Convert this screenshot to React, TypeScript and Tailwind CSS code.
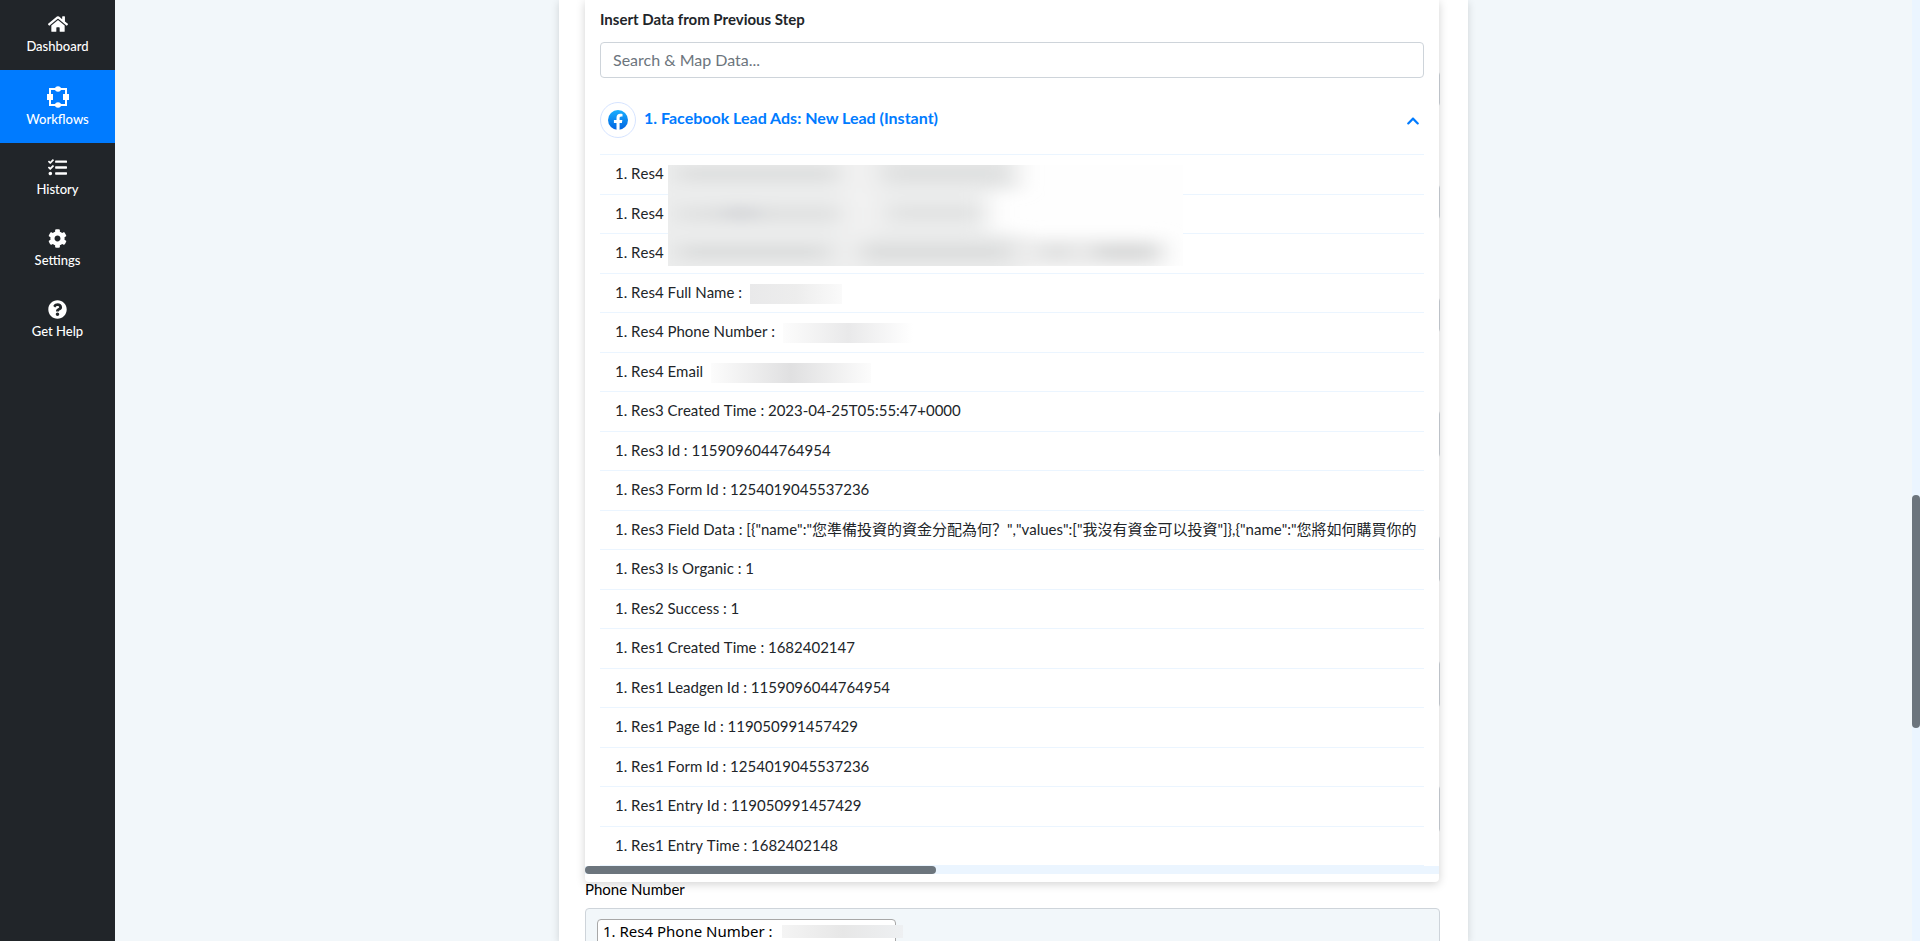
import { FaHome, FaTasks, FaCog, FaQuestionCircle, FaChevronUp } from "react-icons/fa";

const WorkflowIcon = () => (
  <svg viewBox="0 0 22 22" className="h-[22px] w-[22px]" fill="none" aria-hidden="true">
    <rect x="3" y="3" width="16" height="16" stroke="white" strokeWidth="2" />
    <ellipse cx="11" cy="3" rx="3" ry="2.800" fill="white" />
    <ellipse cx="11" cy="19" rx="3" ry="2.800" fill="white" />
    <rect x="0" y="8" width="6" height="6" fill="white" />
    <rect x="16" y="8" width="6" height="6" fill="white" />
  </svg>
);

const FacebookIcon = () => (
  <svg viewBox="0 0 24 24" className="h-5 w-5" aria-hidden="true">
    <defs>
      <linearGradient id="fb" x1="0" y1="0" x2="0" y2="1">
        <stop offset="0" stopColor="#19afff" />
        <stop offset="1" stopColor="#0062e0" />
      </linearGradient>
    </defs>
    <circle cx="12" cy="12" r="12" fill="url(#fb)" />
    <path
      fill="white"
      d="M16.7 15.5l.5-3.5h-3.3V9.7c0-1 .5-1.9 2-1.9h1.5v-3s-1.400-.2-2.700-.2c-2.700 0-4.500 1.700-4.500 4.700V12H7.100v3.500h3.100V24q1.800.2 3.700 0v-8.500z"
    />
  </svg>
);

const nav = [
  { label: "Dashboard", icon: <FaHome size={20} />, style: "h-[70px] pt-[13px]" },
  { label: "Workflows", icon: <WorkflowIcon />, style: "h-[73px] pt-4 bg-[#007bff]" },
  { label: "History", icon: <FaTasks size={19} />, style: "h-[71px] pt-[13px]" },
  { label: "Settings", icon: <FaCog size={19} />, style: "h-[71px] pt-[13px]" },
  { label: "Get Help", icon: <FaQuestionCircle size={19} />, style: "h-[71px] pt-[13px]" },
];

const rows: { text: string; mask?: string }[] = [
  { text: "1. Res4" },
  { text: "1. Res4" },
  { text: "1. Res4" },
  { text: "1. Res4 Full Name :", mask: "w-[92px] from-[#e9e9ea] via-[#ededed] to-[#fafafa]" },
  { text: "1. Res4 Phone Number :", mask: "w-[130px] from-[#fcfcfc] via-[#e9e9ea] to-white" },
  { text: "1. Res4 Email", mask: "w-[160px] from-[#fcfcfc] via-[#e0e0e1] to-[#fcfcfc]" },
  { text: "1. Res3 Created Time : 2023-04-25T05:55:47+0000" },
  { text: "1. Res3 Id : 1159096044764954" },
  { text: "1. Res3 Form Id : 1254019045537236" },
  {
    text: '1. Res3 Field Data : [{"name":"您準備投資的資金分配為何？","values":["我沒有資金可以投資"]},{"name":"您將如何購買你的',
  },
  { text: "1. Res3 Is Organic : 1" },
  { text: "1. Res2 Success : 1" },
  { text: "1. Res1 Created Time : 1682402147" },
  { text: "1. Res1 Leadgen Id : 1159096044764954" },
  { text: "1. Res1 Page Id : 119050991457429" },
  { text: "1. Res1 Form Id : 1254019045537236" },
  { text: "1. Res1 Entry Id : 119050991457429" },
  { text: "1. Res1 Entry Time : 1682402148" },
];

const Mask = () => (
  <svg
    viewBox="0 0 515 101"
    className="pointer-events-none absolute top-[11px] left-[68px] h-[101px] w-[515px]"
    aria-hidden="true"
  >
    <defs>
      <filter id="soft" x="-10%" y="-30%" width="120%" height="160%">
        <feGaussianBlur stdDeviation="12 7" />
      </filter>
    </defs>
    <rect width="515" height="101" fill="#fefefe" />
    <g filter="url(#soft)">
      <rect x="-20" y="-14" width="200" height="130" fill="#ebecec" />
      <rect x="176" y="-14" width="40" height="130" fill="#f2f2f2" />
      <rect x="208" y="-14" width="142" height="40" fill="#e6e7e7" />
      <rect x="210" y="20" width="110" height="50" fill="#ebecec" />
      <rect x="190" y="68" width="160" height="50" fill="#e9eaea" />
      <rect x="350" y="72" width="145" height="34" fill="#eeeeee" />
      <rect x="10" y="2" width="160" height="14" fill="#dcdddd" />
      <rect x="220" y="2" width="118" height="14" fill="#dedfdf" />
      <rect x="10" y="42" width="162" height="14" fill="#dfe0e0" />
      <rect x="58" y="42" width="30" height="12" fill="#d0d1d5" />
      <rect x="222" y="42" width="92" height="12" fill="#dfe0e0" />
      <rect x="10" y="80" width="150" height="14" fill="#dadbdb" />
      <rect x="192" y="80" width="150" height="14" fill="#dadbdb" />
      <rect x="374" y="80" width="30" height="14" fill="#dddede" />
      <rect x="424" y="80" width="68" height="14" fill="#d6d7d7" />
    </g>
  </svg>
);

const fieldHeights = ["h-9", "h-9", "h-9", "h-12", "h-12", "h-12", "h-12"];

export default function App() {
  return (
    <div className="flex h-screen overflow-hidden bg-[#f2f7fa] font-['Lato','Noto_Sans_CJK_SC',sans-serif] text-[#212529]">
      <nav className="w-[115px] shrink-0 bg-[#212529]">
        {nav.map((n) => (
          <a
            key={n.label}
            href="#"
            className={`flex flex-col items-center text-[13px] font-medium text-white ${n.style}`}
          >
            <span className="flex h-[22px] items-center">{n.icon}</span>
            <span className="mt-px leading-5">{n.label}</span>
          </a>
        ))}
      </nav>

      <main className="flex min-w-0 flex-1 justify-center">
        <div className="w-full max-w-[909px] bg-white pr-7 pl-[26px] shadow-[0_2px_8px_rgba(0,0,0,0.15)]">
          <div className="relative">
            <div className="flex h-[881px] flex-col gap-[77px] pt-[71px]" aria-hidden="true">
              {fieldHeights.map((h, i) => (
                <div key={i} className={`rounded border border-[#ced4da] ${h}`} />
              ))}
            </div>
            <section className="absolute top-0 right-px left-0 z-10 overflow-hidden rounded-b bg-white shadow-[0_2px_10px_rgba(0,0,0,0.18)]">
              <div className="px-[15px]">
                <label htmlFor="search" className="block pt-[7px] text-[15px] leading-6 font-bold">
                  Insert Data from Previous Step
                </label>
                <input
                  id="search"
                  type="text"
                  placeholder="Search & Map Data..."
                  className="mt-[11px] block h-9 w-full rounded border border-[#ced4da] px-3 pb-0.5 text-base placeholder:text-[#6c757d]"
                />
                <button className="mt-6 flex h-9 w-full items-center text-left text-[#007bff]">
                  <span className="flex h-9 w-9 items-center justify-center rounded-full border border-[#d6e4ff]">
                    <FacebookIcon />
                  </span>
                  <span className="ml-2 flex-1 pb-1 text-base font-bold">
                    1. Facebook Lead Ads: New Lead (Instant)
                  </span>
                  <FaChevronUp size={14} className="mt-0.5 mr-1" />
                </button>
              </div>
              <div className="relative mx-[15px] mt-4">
                <ul className="grid h-[712px] auto-rows-fr grid-cols-[minmax(0,1fr)] border-t border-[#ebf5ff] text-[15px] [font-kerning:none]">
                  {rows.map((r, i) => (
                    <li
                      key={i}
                      className="flex items-center border-b border-[#ebf5ff] pb-0.5 pl-[15px] leading-6 whitespace-nowrap"
                    >
                      {r.text}
                      {r.mask && <span className={`mt-1 ml-2 h-5 bg-linear-to-r ${r.mask}`} />}
                    </li>
                  ))}
                </ul>
                <Mask />
              </div>
              <div className="mb-2 h-2 bg-[#ebf5ff]">
                <div className="h-2 w-[351px] rounded bg-[#6c757d]" />
              </div>
            </section>
          </div>
          <span id="phone-label" className="block pb-[11px] text-[15px] leading-4 text-black">
            Phone Number
          </span>
          <div
            role="group"
            aria-labelledby="phone-label"
            className="h-12 rounded border border-[#ced4da] bg-[#f2f7fa] px-[11px] pt-2.5"
          >
            <div className="relative flex h-7 w-[299px] items-start rounded border border-[#a8a8a8] bg-white px-[5px] pt-px font-['Noto_Sans',sans-serif] text-[15px] leading-5 whitespace-nowrap text-black">
              1. Res4 Phone Number :
              <span className="absolute top-[5px] -right-2 h-[13px] w-[121px] bg-linear-to-r from-[#f4f4f4] via-[#e7e7e7] to-[#eef0f2]" />
            </div>
          </div>
        </div>
      </main>
      <div className="w-2 shrink-0 bg-[#ebf5ff] pt-[495px]">
        <div className="h-[233px] rounded bg-[#6c757d]" />
      </div>
    </div>
  );
}
